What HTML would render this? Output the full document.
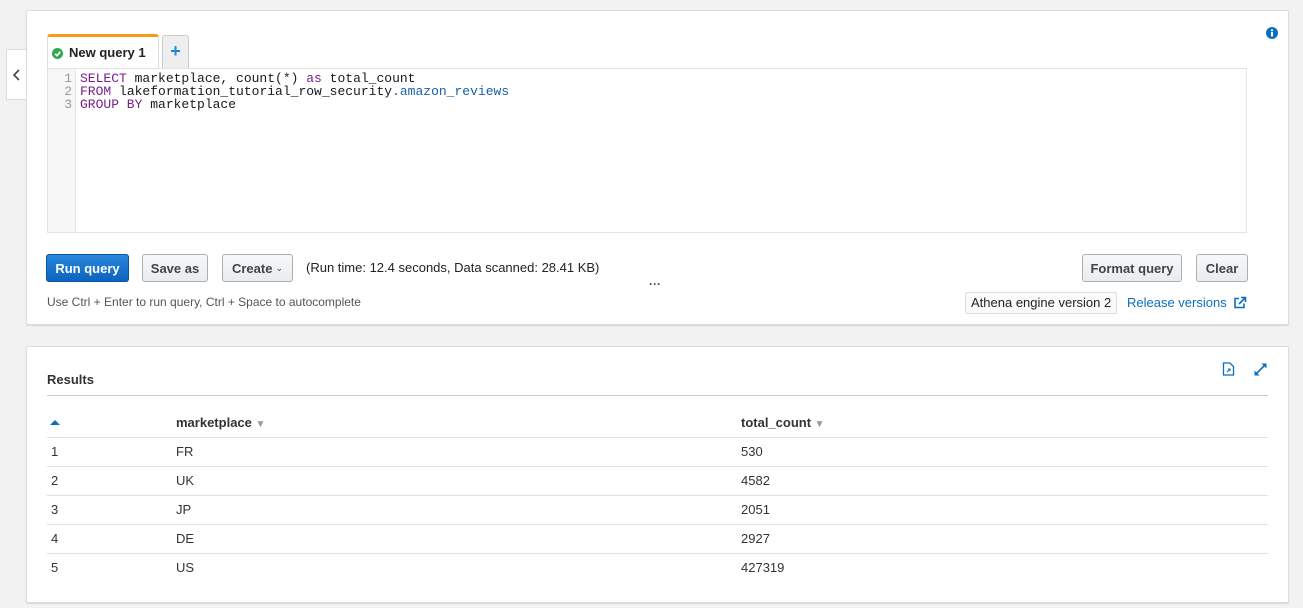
<!DOCTYPE html>
<html><head><meta charset="utf-8"><style>
*{box-sizing:border-box;margin:0;padding:0}
body{width:1303px;height:608px;background:#f2f2f2;font-family:"Liberation Sans",sans-serif;font-size:13px;color:#16191f;position:relative;overflow:hidden}
.abs{position:absolute}
.panel{position:absolute;background:#fff;border:1px solid #ddd;border-radius:2px;box-shadow:0 1px 1px rgba(0,0,0,.12)}
.btn{position:absolute;top:254px;height:28px;border:1px solid #aab0b8;border-radius:3px;background:linear-gradient(#f7f8fa,#e9ebed);font-weight:bold;font-size:13px;color:#444;display:flex;align-items:center;justify-content:center}
.code{font-family:"Liberation Mono",monospace;font-size:13px;line-height:13px}
.kw{color:#7a1f8c}
.row{position:absolute;left:47px;width:1221px;height:29px;border-top:1px solid #e0e0e0;font-size:13px;color:#333}
.row span{position:absolute;top:6px}
</style></head><body>
<div class="abs" style="left:6px;top:49px;width:21px;height:51px;background:#fff;border:1px solid #ddd;border-right:none"></div>
<svg class="abs" style="left:12px;top:68px" width="10" height="14"><path d="M7 2 L2 7 L7 12" stroke="#444" stroke-width="1.6" fill="none"/></svg>
<div class="panel" style="left:26px;top:10px;width:1263px;height:315px"></div>
<div class="abs" style="left:47px;top:34px;width:112px;height:35px;background:#fff;border:1px solid #ddd;border-top:3px solid #f59b15;border-bottom:none;border-radius:3px 3px 0 0"></div>
<svg class="abs" style="left:52px;top:48px" width="11" height="11"><circle cx="5.5" cy="5.5" r="5.5" fill="#2fa84f"/><path d="M3 5.8 L5 7.7 L8.3 3.8" stroke="#fff" stroke-width="1.6" fill="none"/></svg>
<div class="abs" style="left:69px;top:45px;font-weight:bold;font-size:13px;color:#222">New query 1</div>
<div class="abs" style="left:162px;top:35px;width:27px;height:33px;background:#eee;border:1px solid #ccc;border-bottom:none;border-radius:3px 3px 0 0;color:#1a8ad4;font-weight:bold;font-size:18px;text-align:center;line-height:30px">+</div>
<div class="abs" style="left:47px;top:68px;width:1200px;height:165px;border:1px solid #e4e4e4;background:#fff"></div>
<div class="abs" style="left:48px;top:69px;width:28px;height:163px;background:#f7f7f7;border-right:1px solid #e4e4e4"></div>
<div class="abs code" style="left:48px;top:72px;width:24px;text-align:right;color:#999">1<br>2<br>3</div>
<div class="abs code" style="left:80px;top:72px;white-space:pre"><span class="kw">SELECT</span> marketplace, count(*) <span class="kw">as</span> total_count
<span class="kw">FROM</span> lakeformation_tutorial_row_security<span style="color:#1a5fa8">.amazon_reviews</span>
<span class="kw">GROUP BY</span> marketplace</div>
<svg class="abs" style="left:1266px;top:27px" width="12" height="12"><circle cx="6" cy="6" r="6" fill="#0b6fc0"/><rect x="5" y="5" width="2" height="4.5" fill="#fff"/><circle cx="6" cy="3.2" r="1.1" fill="#fff"/></svg>
<div class="btn" style="left:46px;width:83px;background:linear-gradient(#2a87db,#0c63c0);border-color:#0a55a8;color:#fff">Run query</div>
<div class="btn" style="left:142px;width:66px">Save as</div>
<div class="btn" style="left:222px;width:71px">Create <span style="font-weight:normal;font-size:9px;margin-left:3px">&#8964;</span></div>
<div class="abs" style="left:306px;top:260px;font-size:13px;color:#222">(Run time: 12.4 seconds, Data scanned: 28.41 KB)</div>
<div class="abs" style="left:649px;top:277px;font-size:12px;color:#444;font-weight:bold">···</div>
<div class="btn" style="left:1082px;width:100px">Format query</div>
<div class="btn" style="left:1196px;width:52px">Clear</div>
<div class="abs" style="left:47px;top:295px;font-size:12px;color:#555">Use Ctrl + Enter to run query, Ctrl + Space to autocomplete</div>
<div class="abs" style="left:965px;top:292px;width:152px;height:22px;border:1px solid #ddd;border-radius:2px;background:#fafafa;font-size:13px;color:#222;line-height:20px;padding-left:5px">Athena engine version 2</div>
<div class="abs" style="left:1127px;top:295px;font-size:13px;color:#0b6fc0">Release versions</div>
<svg class="abs" style="left:1233px;top:296px" width="14" height="13"><path d="M6 2.5 H2 V11.5 H11 V7.5" stroke="#0b6fc0" stroke-width="1.6" fill="none"/><path d="M6 8 L12 2 M8 1.5 H12.5 V6" stroke="#0b6fc0" stroke-width="1.6" fill="none"/></svg>

<div class="panel" style="left:26px;top:346px;width:1263px;height:257px"></div>
<div class="abs" style="left:47px;top:372px;font-weight:bold;font-size:13px;color:#333">Results</div>
<svg class="abs" style="left:1222px;top:362px" width="13" height="14"><path d="M1.5 1 H8 L11.5 4.5 V13 H1.5 Z" stroke="#0b6fc0" stroke-width="1.3" fill="none"/><path d="M5 10 L8 7 M6 7 H8 V9" stroke="#0b6fc0" stroke-width="1" fill="none"/></svg>
<svg class="abs" style="left:1253px;top:362px" width="15" height="15"><path d="M2 13 L13 2" stroke="#0b6fc0" stroke-width="1.6"/><path d="M8.5 1.5 H13.5 V6.5 Z" fill="#0b6fc0"/><path d="M1.5 8.5 V13.5 H6.5 Z" fill="#0b6fc0"/></svg>
<div class="abs" style="left:47px;top:395px;width:1221px;height:1px;background:#c8c8c8"></div>
<svg class="abs" style="left:50px;top:419px" width="10" height="7"><path d="M0 6 L5 1 L10 6Z" fill="#0b6fc0"/></svg>
<div class="abs" style="left:176px;top:415px;font-weight:bold;color:#333">marketplace <span style="color:#999;font-size:10px">&#9660;</span></div>
<div class="abs" style="left:741px;top:415px;font-weight:bold;color:#333">total_count <span style="color:#999;font-size:10px">&#9660;</span></div>
<div class="row" style="top:437px"><span style="left:4px">1</span><span style="left:129px">FR</span><span style="left:694px">530</span></div>
<div class="row" style="top:466px"><span style="left:4px">2</span><span style="left:129px">UK</span><span style="left:694px">4582</span></div>
<div class="row" style="top:495px"><span style="left:4px">3</span><span style="left:129px">JP</span><span style="left:694px">2051</span></div>
<div class="row" style="top:524px"><span style="left:4px">4</span><span style="left:129px">DE</span><span style="left:694px">2927</span></div>
<div class="row" style="top:553px"><span style="left:4px">5</span><span style="left:129px">US</span><span style="left:694px">427319</span></div>
</body></html>
